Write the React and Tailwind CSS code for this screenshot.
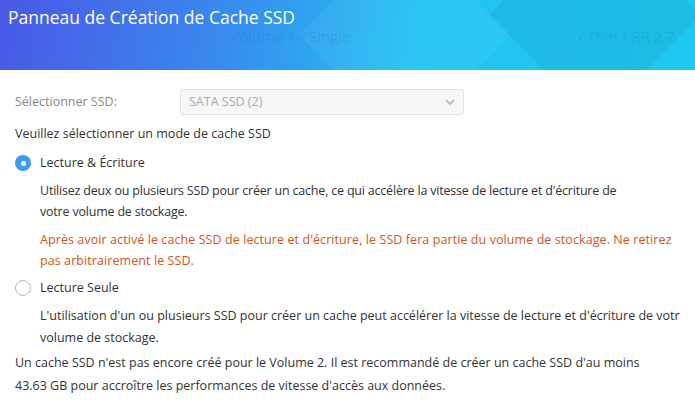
import React from "react";

const Radio = ({ checked }) =>
  checked ? (
    <span className="flex h-4 w-4 items-center justify-center rounded-full bg-[#3d9be9]">
      <span className="h-[5px] w-[5px] rounded-full bg-white" />
    </span>
  ) : (
    <span className="h-4 w-4 rounded-full border border-[#b5b5b5] bg-white" />
  );

const App = () => {
  return (
    <div className="h-[405px] w-[695px] overflow-hidden bg-white font-['Open_Sans',sans-serif] text-[12.5px] text-[#333]">
      {/* header banner */}
      <div className="relative h-[70px] overflow-hidden bg-[linear-gradient(100deg,#4a58e6_0%,#3a86ee_30%,#22c3f2_60%,#1ec8f0_100%)]">
        <div className="absolute left-[330px] top-[-40px] h-[150px] w-[150px] rotate-45 bg-white/5" />
        <div className="absolute left-[520px] top-[-60px] h-[150px] w-[150px] rotate-45 bg-black/5" />
        <h1 className="absolute left-2 top-[4px] text-[17.5px] text-white">
          Panneau de Création de Cache SSD
        </h1>
        <span className="absolute left-[230px] top-[25px] text-[15px] text-[#2f5fc0]/20">
          Volume 1 / Single
        </span>
        <span className="absolute left-[578px] top-[25px] text-[15px] text-[#1b6fb0]/20">
          / Thin / RR 2.7
        </span>
      </div>

      <div className="px-[15px]">
        <div className="mt-[19px] flex items-center">
          <span className="w-[165px] text-[#888]">Sélectionner SSD:</span>
          <div className="flex h-[26px] w-[284px] items-center justify-between rounded-[3px] border border-[#e2e2e2] bg-[#f7f7f7] px-[8px] text-[#aaa]">
            <span>SATA SSD (2)</span>
            <svg width="10" height="6" viewBox="0 0 10 6" fill="none" stroke="#bbb" strokeWidth="1.8">
              <path d="M1 1l4 4 4-4" />
            </svg>
          </div>
        </div>

        <p className="mt-[8px] leading-[22px]">Veuillez sélectionner un mode de cache SSD</p>

        <label className="mt-[7px] flex items-center gap-[9px] leading-[22px]">
          <Radio checked />
          <span>Lecture &amp; Écriture</span>
        </label>

        <div className="mt-[6px] w-[680px] whitespace-nowrap pl-[25px] leading-[21px]">
          <p className="tracking-[-0.2px]">
            Utilisez deux ou plusieurs SSD pour créer un cache, ce qui accélère la vitesse de lecture et d'écriture de
          </p>
          <p className="tracking-[-0.2px]">votre volume de stockage.</p>
          <p className="mt-[7px] tracking-[0.08px] text-[#d3541c]">
            Après avoir activé le cache SSD de lecture et d'écriture, le SSD fera partie du volume de stockage. Ne retirez
          </p>
          <p className="tracking-[0.08px] text-[#d3541c]">pas arbitrairement le SSD.</p>
        </div>

        <label className="mt-[6px] flex items-center gap-[9px] leading-[22px]">
          <Radio />
          <span>Lecture Seule</span>
        </label>

        <div className="mt-[6px] w-[665px] overflow-hidden whitespace-nowrap pl-[25px] leading-[22px]">
          <p>L'utilisation d'un ou plusieurs SSD pour créer un cache peut accélérer la vitesse de lecture et d'écriture de votre</p>
          <p>volume de stockage.</p>
        </div>

        <div className="mt-[2px] whitespace-nowrap leading-[23px]">
          <p>Un cache SSD n'est pas encore créé pour le Volume 2. Il est recommandé de créer un cache SSD d'au moins</p>
          <p>43.63 GB pour accroître les performances de vitesse d'accès aux données.</p>
        </div>
      </div>
    </div>
  );
};

export default App;
